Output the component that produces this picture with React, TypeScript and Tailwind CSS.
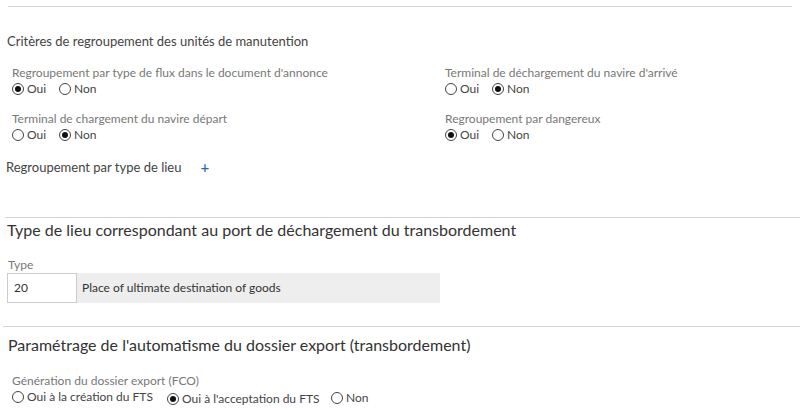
import React from "react";

const font = { fontFamily: 'Lato, "Open Sans", sans-serif' };

function Radio({ checked, label }: { checked: boolean; label: string }) {
  return (
    <span className="inline-flex items-center gap-[3px]">
      <span className="relative inline-flex h-[12px] w-[12px] items-center justify-center rounded-full border border-[#444]">
        {checked && <span className="h-[6px] w-[6px] rounded-full bg-[#111]" />}
      </span>
      <span>{label}</span>
    </span>
  );
}

function Field({ label, yes }: { label: string; yes: boolean }) {
  return (
    <div className="flex flex-col">
      <div className="h-[16px] text-[12px] leading-[16px] text-[#777]">{label}</div>
      <div className="flex h-[16px] items-center gap-[13px] text-[12px] leading-[16px] text-[#444]">
        <Radio checked={yes} label="Oui" />
        <Radio checked={!yes} label="Non" />
      </div>
    </div>
  );
}

export default function App() {
  return (
    <div className="h-[410px] w-[800px] overflow-hidden bg-white text-[#444]" style={font}>
      <div className="pt-[6px]">
        <div className="ml-[8px] mr-[8px] h-px bg-[#d4d4d4]" />
      </div>
      <div className="pl-[7px] pt-[25px] text-[13px] leading-[18px]">Critères de regroupement des unités de manutention</div>
      <div className="grid grid-cols-[433px_1fr] gap-y-[14px] pl-[12px] pt-[15px]">
        <Field label="Regroupement par type de flux dans le document d'annonce" yes={true} />
        <Field label="Terminal de déchargement du navire d'arrivé" yes={false} />
        <Field label="Terminal de chargement du navire départ" yes={false} />
        <Field label="Regroupement par dangereux" yes={true} />
      </div>
      <div className="flex items-center pl-[6px] pt-[15px] text-[13px] leading-[18px]">
        <span>Regroupement par type de lieu</span>
        <span className="ml-[19px] text-[15px] font-semibold leading-[18px] text-[#1b6ec2]">+</span>
      </div>
      <div className="pt-[41px]">
        <div className="ml-[5px] h-px bg-[#d4d4d4]" />
      </div>
      <div className="pl-[7px] pt-[1px] text-[16px] leading-[22px] text-[#333]">
        Type de lieu correspondant au port de déchargement du transbordement
      </div>
      <div className="pl-[8px] pt-[16px] text-[12px] leading-[16px] text-[#777]">Type</div>
      <div className="ml-[7px] flex h-[30px] w-[433px] text-[12px]">
        <div className="flex w-[70px] items-center border border-[#ccc] bg-white pl-[6px] text-[#333]">20</div>
        <div className="flex flex-1 items-center bg-[#eeeeee] pl-[5px] text-[#333]">Place of ultimate destination of goods</div>
      </div>
      <div className="pt-[23px]">
        <div className="ml-[3px] h-px bg-[#d4d4d4]" />
      </div>
      <div className="pl-[8px] pt-[7px] text-[16px] leading-[22px] text-[#333]">
        Paramétrage de l'automatisme du dossier export (transbordement)
      </div>
      <div className="pl-[12px] pt-[17px] text-[12px] leading-[16px] text-[#777]">Génération du dossier export (FCO)</div>
      <div className="flex h-[18px] items-center pl-[12px] text-[12px] leading-[16px] text-[#444]">
        <span className="w-[155px]"><Radio checked={false} label="Oui à la création du FTS" /></span>
        <span className="w-[164px]"><Radio checked={true} label="Oui à l'acceptation du FTS" /></span>
        <Radio checked={false} label="Non" />
      </div>
    </div>
  );
}
